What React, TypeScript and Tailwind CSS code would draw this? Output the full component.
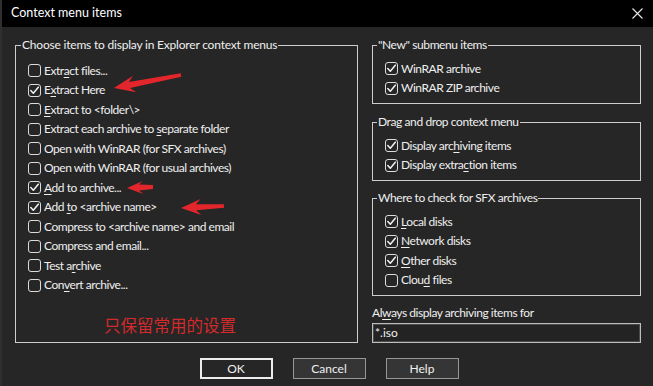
import React from "react";

const FONT = { fontFamily: 'Lato, "Noto Sans", sans-serif' };

function Label({ text }: { text: string }) {
  const i = text.indexOf("&");
  if (i < 0) return <span>{text}</span>;
  return (
    <span>
      {text.slice(0, i)}
      <span className="underline underline-offset-[2px] decoration-1">{text[i + 1]}</span>
      {text.slice(i + 2)}
    </span>
  );
}

function Check({ label, checked }: { label: string; checked?: boolean }) {
  return (
    <div className="flex h-[19.5px] items-center gap-[3px]">
      <div className="flex h-[13px] w-[13px] shrink-0 items-center justify-center rounded-[3px] border border-[#dcdcdc] bg-[#262626]">
        {checked && (
          <svg width="11" height="11" viewBox="0 0 11 11">
            <path d="M1.8 5.6 L4.3 8.3 L9.3 2.2" fill="none" stroke="#f2f2f2" strokeWidth="1.5" strokeLinecap="round" strokeLinejoin="round" />
          </svg>
        )}
      </div>
      <span className="whitespace-nowrap leading-[16px] tracking-[-0.45px]">
        <Label text={label} />
      </span>
    </div>
  );
}

function arrow(tx: number, ty: number, sx: number, sy: number, headLen: number, headW: number, nearW: number, tailW: number) {
  const dx = sx - tx;
  const dy = sy - ty;
  const len = Math.hypot(dx, dy);
  const ux = dx / len;
  const uy = dy / len;
  const px = -uy;
  const py = ux;
  const pt = (a: number, b: number) => `${(tx + ux * a + px * b).toFixed(2)},${(ty + uy * a + py * b).toFixed(2)}`;
  const tail = (b: number) => `${(sx + px * b).toFixed(2)},${(sy + py * b).toFixed(2)}`;
  return [
    pt(0, 0),
    pt(headLen, headW / 2),
    pt(headLen * 0.75, nearW / 2),
    tail(tailW / 2),
    tail(-tailW / 2),
    pt(headLen * 0.75, -nearW / 2),
    pt(headLen, -headW / 2),
  ].join(" ");
}

const leftItems: [string, boolean][] = [
  ["Extr&act files...", false],
  ["E&xtract Here", true],
  ["&Extract to <folder\\>", false],
  ["Extract each archive to &separate folder", false],
  ["Open with WinRAR (for SFX archives)", false],
  ["Open with WinRAR (for usual archives)", false],
  ["&Add to archive...", true],
  ["Add &to <archive name>", true],
  ["Compress to <archive name> and email", false],
  ["Compress and email...", false],
  ["Test a&rchive", false],
  ["Con&vert archive...", false],
];

export default function App() {
  return (
    <div
      className="relative flex h-[386px] w-[653px] flex-col overflow-hidden border-l-2 border-[#2f2f2f] bg-[#262626] text-[12px] text-[#efefef]"
      style={FONT}
    >
      <div className="flex h-[27px] shrink-0 items-center justify-between bg-black pl-[9px] pr-[10px]">
        <span className="text-[12.5px] text-white">Context menu items</span>
        <svg width="11" height="11" viewBox="0 0 11 11">
          <path d="M0.5 0.5 L10.5 10.5 M10.5 0.5 L0.5 10.5" stroke="#e8e8e8" strokeWidth="1.1" />
        </svg>
      </div>

      <div className="flex gap-[14px] pl-[13px] pt-[10px]">
        <fieldset className="h-[306px] w-[343px] border border-[#cdcdcd]">
          <legend className="ml-[5px] px-px leading-[16px] tracking-[-0.2px]">Choose items to display in Explorer context menus</legend>
          <div className="pl-[12px] pt-[8px]">
            {leftItems.map(([l, c]) => (
              <Check key={l} label={l} checked={c} />
            ))}
            <div
              className="ml-[76px] mt-[19px] text-[16.5px] leading-[22px] text-[#d42a2c]"
              style={{ fontFamily: '"Noto Sans CJK SC", sans-serif' }}
            >
              只保留常用的设置
            </div>
          </div>
        </fieldset>

        <div className="flex w-[269px] flex-col">
          <fieldset className="border border-[#cdcdcd] pb-[5px]">
            <legend className="ml-[4px] px-px leading-[16px] tracking-[-0.4px]">"New" submenu items</legend>
            <div className="pl-[12px] pt-[6px]">
              <Check label="WinRAR archive" checked />
              <Check label="WinRAR ZIP archive" checked />
            </div>
          </fieldset>
          <fieldset className="mt-[10px] border border-[#cdcdcd] pb-[5px]">
            <legend className="ml-[4px] px-px leading-[16px] tracking-[-0.4px]">Drag and drop context menu</legend>
            <div className="pl-[12px] pt-[6px]">
              <Check label="Display arc&hiving items" checked />
              <Check label="Display extra&ction items" checked />
            </div>
          </fieldset>
          <fieldset className="mt-[9px] border border-[#cdcdcd] pb-[5px]">
            <legend className="ml-[4px] px-px leading-[16px] tracking-[-0.4px]">Where to check for SFX archives</legend>
            <div className="pl-[12px] pt-[6px]">
              <Check label="&Local disks" checked />
              <Check label="&Network disks" checked />
              <Check label="&Other disks" checked />
              <Check label="Clou&d files" />
            </div>
          </fieldset>
          <div className="mt-[9px] leading-[16px] tracking-[-0.45px]">
            <Label text="Al&ways display archiving items for" />
          </div>
          <div className="mt-[2px] flex h-[20px] items-center border border-[#bdbdbd] bg-[#232323] pl-[2px] leading-[16px] shadow-[inset_0_0_0_1px_#4a4a4a]">
            *.iso
          </div>
        </div>
      </div>

      <div className="mt-[15px] flex justify-center gap-[20px] pl-[3px]">
        <button className="h-[21px] w-[73px] border-2 border-[#ececec] bg-[#262626] leading-[16px] text-[#f0f0f0]">OK</button>
        <button className="h-[21px] w-[73px] border border-[#969696] bg-[#353535] leading-[16px] text-[#f0f0f0]">Cancel</button>
        <button className="h-[21px] w-[73px] border border-[#969696] bg-[#353535] leading-[16px] text-[#f0f0f0]">Help</button>
      </div>

      <svg className="pointer-events-none absolute left-[-2px] top-0" width="653" height="386" viewBox="0 0 653 386">
        <polygon points={arrow(114, 88, 181, 75, 21, 17, 6, 3.5)} fill="#e3262b" />
        <polygon points={arrow(127, 188, 153, 187, 16, 13, 6, 4)} fill="#e3262b" />
        <polygon points={arrow(181, 208, 224, 206, 20, 16, 6, 3.5)} fill="#e3262b" />
      </svg>
    </div>
  );
}
